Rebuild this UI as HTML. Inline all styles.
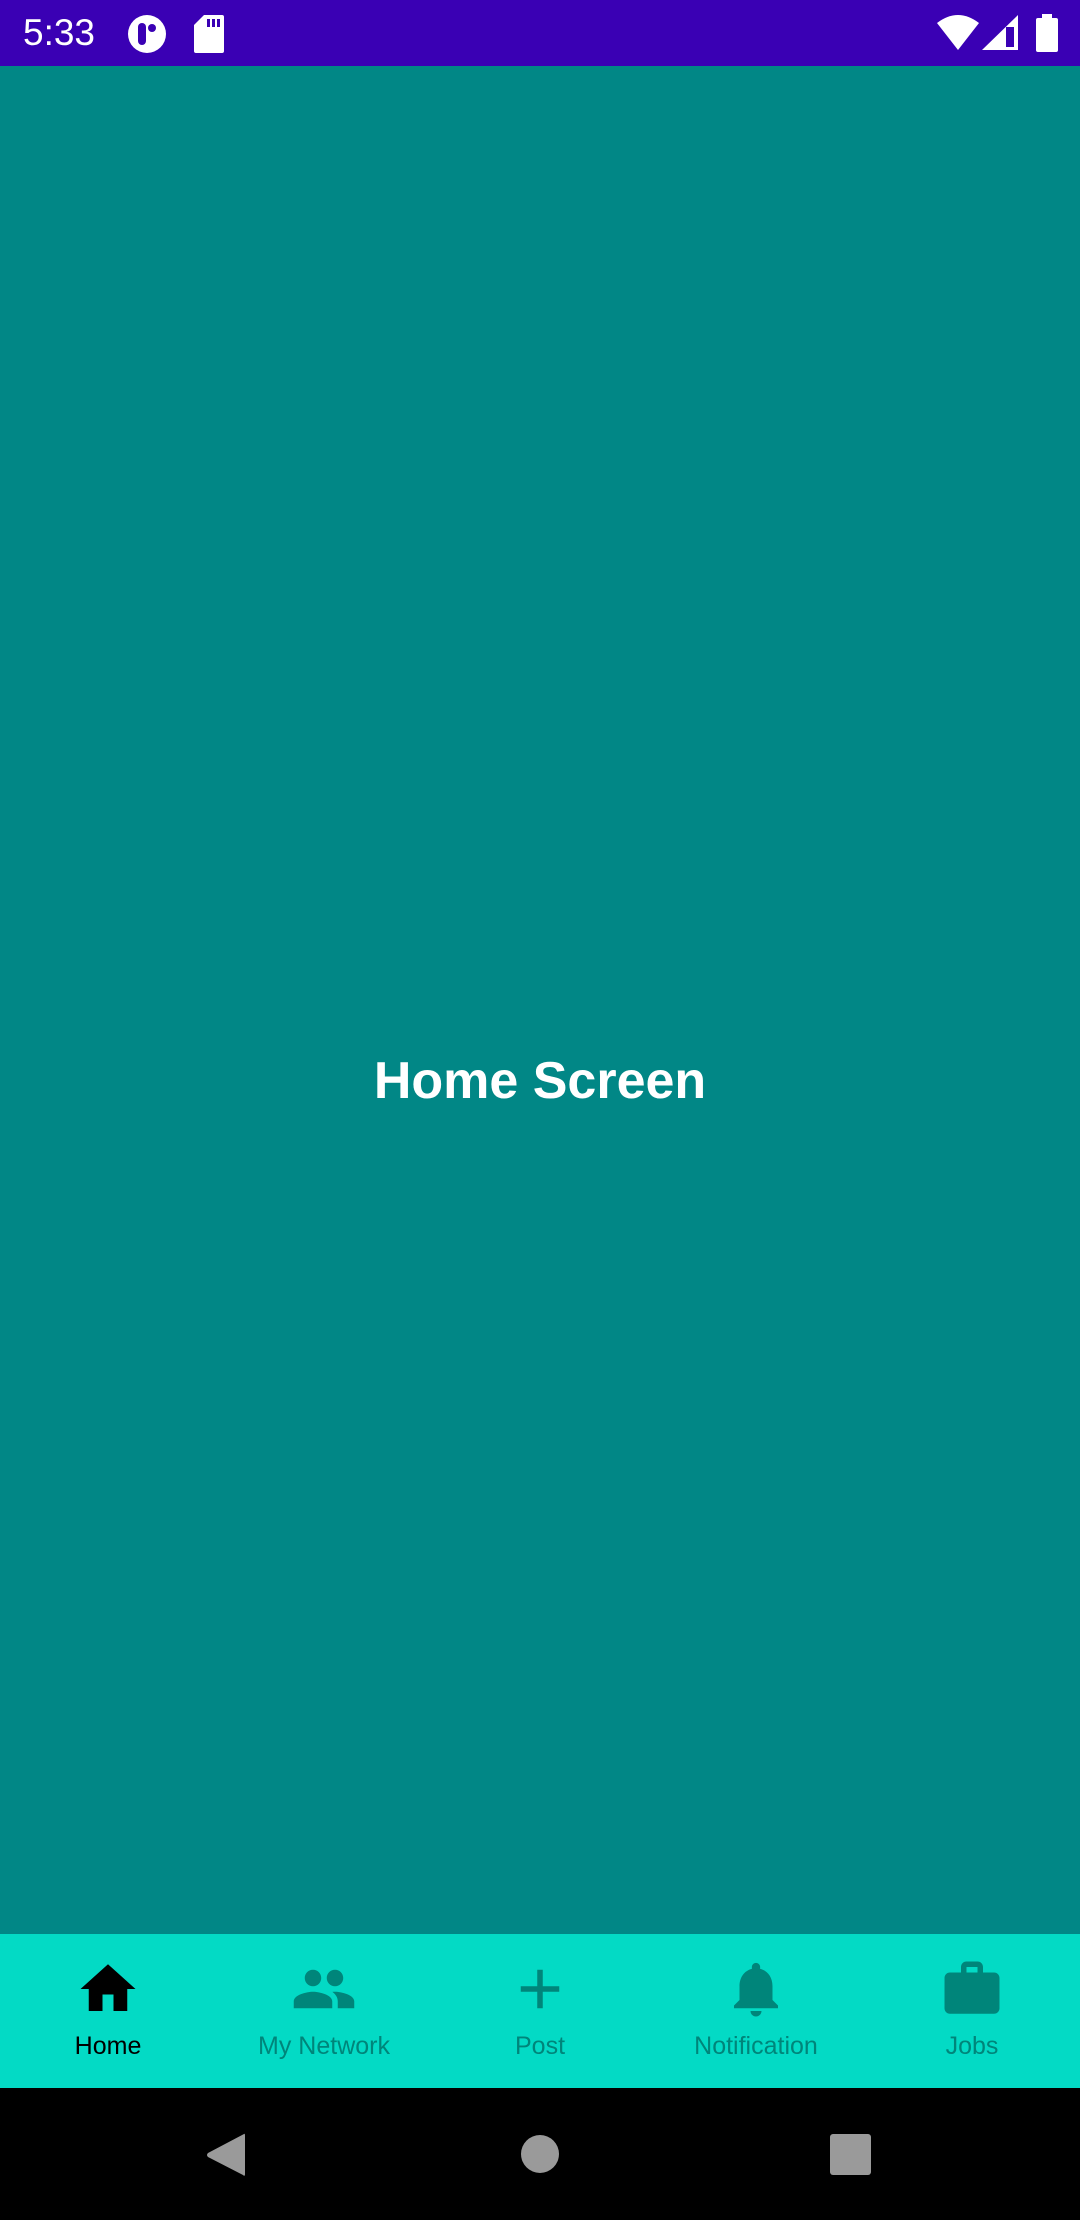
<!DOCTYPE html>
<html><head><style>
*{margin:0;padding:0;box-sizing:border-box}
body{width:1080px;height:2220px;position:relative;overflow:hidden;background:#018786;font-family:"Liberation Sans",sans-serif}
.status{position:absolute;top:0;left:0;width:1080px;height:66px;background:#3a00b4;color:#fff}
.main{position:absolute;top:66px;left:0;width:1080px;height:1868px;background:#018786}
.title{position:absolute;top:1046px;left:0;width:1080px;text-align:center;color:#fff;font-weight:bold;font-size:52px;line-height:70px}
.nav{position:absolute;top:1934px;left:0;width:1080px;height:154px;background:#03dac5}
.item{position:absolute;top:0;width:216px;height:154px}
.item svg{position:absolute;left:75px;top:22px}
.item span{position:absolute;left:0;width:216px;top:98px;text-align:center;font-size:25px;color:#00857a}
.sys{position:absolute;top:2088px;left:0;width:1080px;height:132px;background:#000}
</style></head><body>
<div class="status">
<div style="position:absolute;left:23px;top:10px;font-size:37px;line-height:46px">5:33</div>
<svg style="position:absolute;left:127px;top:14px" width="40" height="40" viewBox="0 0 40 40"><circle cx="20" cy="20" r="19" fill="#fff"/><rect x="11" y="9" width="8" height="22" rx="4" fill="#3a00b4"/><circle cx="25" cy="14" r="4" fill="#3a00b4"/></svg>
<svg style="position:absolute;left:194px;top:15px" width="30" height="38" viewBox="0 0 30 38"><path d="M10 0H28a2 2 0 0 1 2 2V36a2 2 0 0 1-2 2H2a2 2 0 0 1-2-2V10Z" fill="#fff"/><rect x="13" y="4" width="3" height="8" fill="#3a00b4"/><rect x="18" y="4" width="3" height="8" fill="#3a00b4"/><rect x="23" y="4" width="3" height="8" fill="#3a00b4"/></svg>
<svg style="position:absolute;left:937px;top:15px" width="42" height="36" viewBox="0 0 42 36"><path d="M0 8Q21-8 42 8L21 35Z" fill="#fff"/></svg>
<svg style="position:absolute;left:982px;top:15px" width="36" height="36" viewBox="0 0 36 36"><path d="M36 0V35H0Z" fill="#fff"/><rect x="24" y="12" width="8" height="20" fill="#3a00b4"/></svg>
<svg style="position:absolute;left:1036px;top:14px" width="22" height="38" viewBox="0 0 22 38"><rect x="6" y="0" width="10" height="5" fill="#fff"/><rect x="0" y="4" width="22" height="34" rx="2" fill="#fff"/></svg>
</div>
<div class="main"></div>
<div class="title">Home Screen</div>
<div class="nav">
<div class="item" style="left:0"><svg width="66" height="66" viewBox="0 0 24 24"><path d="M10 20v-6h4v6h5v-8h3L12 3 2 12h3v8z" fill="#000"/></svg><span style="color:#000">Home</span></div>
<div class="item" style="left:216px"><svg width="66" height="66" viewBox="0 0 24 24"><path d="M16 11c1.66 0 2.99-1.34 2.99-3S17.66 5 16 5c-1.66 0-3 1.34-3 3s1.34 3 3 3zm-8 0c1.66 0 2.99-1.34 2.99-3S9.66 5 8 5C6.34 5 5 6.34 5 8s1.34 3 3 3zm0 2c-2.33 0-7 1.17-7 3.5V19h14v-2.5c0-2.33-4.67-3.5-7-3.5zm8 0c-.29 0-.62.02-.97.05 1.16.84 1.97 1.97 1.97 3.45V19h6v-2.5c0-2.33-4.67-3.5-7-3.5z" fill="#00857a"/></svg><span>My Network</span></div>
<div class="item" style="left:432px"><svg width="66" height="66" viewBox="0 0 24 24"><path d="M19 13h-6v6h-2v-6H5v-2h6V5h2v6h6v2z" fill="#00857a"/></svg><span>Post</span></div>
<div class="item" style="left:648px"><svg width="66" height="66" viewBox="0 0 24 24"><path d="M12 22c1.1 0 2-.9 2-2h-4c0 1.1.89 2 2 2zm6-6v-5c0-3.07-1.64-5.64-4.5-6.32V4c0-.83-.67-1.5-1.5-1.5s-1.5.67-1.5 1.5v.68C7.63 5.36 6 7.92 6 11v5l-2 2v1h16v-1l-2-2z" fill="#00857a"/></svg><span>Notification</span></div>
<div class="item" style="left:864px"><svg width="66" height="66" viewBox="0 0 24 24"><path d="M20 6h-4V4c0-1.11-.89-2-2-2h-4c-1.11 0-2 .89-2 2v2H4c-1.11 0-1.99.89-1.99 2L2 19c0 1.11.89 2 2 2h16c1.11 0 2-.89 2-2V8c0-1.11-.89-2-2-2zm-6 0h-4V4h4v2z" fill="#00857a"/></svg><span>Jobs</span></div>
</div>
<div class="sys">
<svg style="position:absolute;left:205px;top:45px" width="42" height="44" viewBox="0 0 42 44"><path d="M39 1Q40 0 40 3V41Q40 44 38 42L3 24Q1 22 3 20Z" fill="#9a9a9a"/></svg>
<div style="position:absolute;left:521px;top:47px;width:38px;height:38px;border-radius:50%;background:#9a9a9a"></div>
<div style="position:absolute;left:830px;top:46px;width:41px;height:41px;border-radius:3px;background:#9a9a9a"></div>
</div>
</body></html>
